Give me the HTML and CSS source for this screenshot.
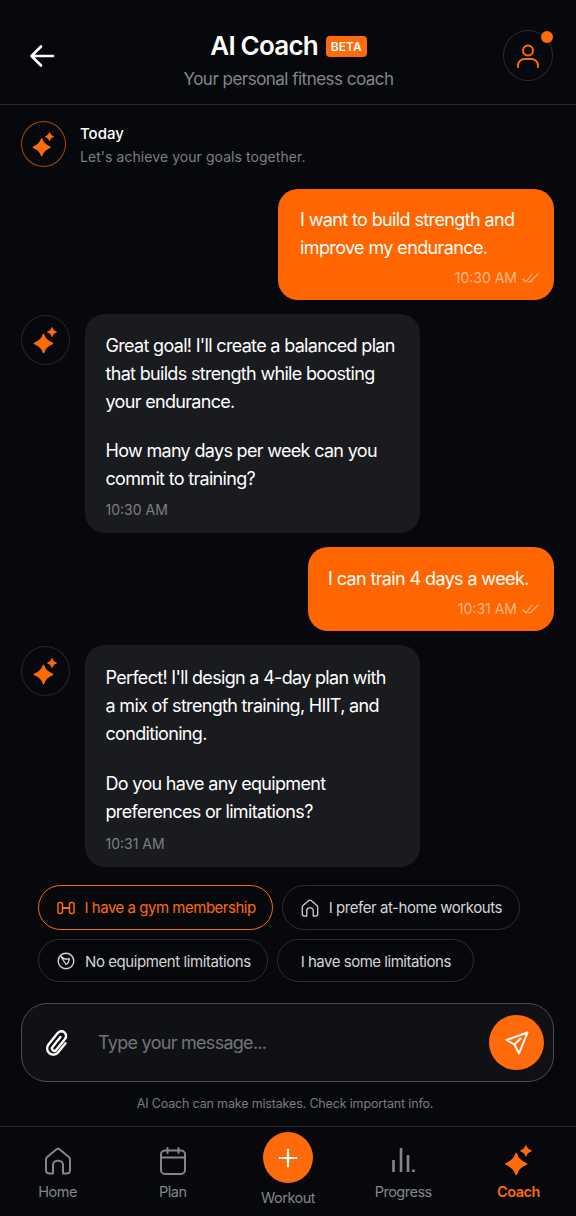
FILE: index.html
```html
<!DOCTYPE html>
<html lang="en">
<head>
    <meta charset="UTF-8" />
    <meta name="viewport" content="width=device-width, initial-scale=1.0" />
    <title>AI Coach</title>
    <link rel="stylesheet" href="styles.css">
</head>
<body>
    <svg class="sprites" width="0" height="0">
        <symbol id="sparkle" viewBox="0 0 25 28">
            <path d="M10.500 8.500c1 4 4 7 9 9-5 2-8 5-9 9-1-4-4-7-9-9 5-2 8-5 9-9z" fill="currentColor" stroke="currentColor" stroke-width="1.600" stroke-linejoin="round"/>
            <path d="M19 1.500c.6 2 2 3.700 4.500 4.500-2.500.8-3.900 2.500-4.500 4.500-.6-2-2-3.700-4.500-4.500 2.500-.8 3.900-2.500 4.500-4.500z" fill="currentColor" stroke="currentColor" stroke-width="1" stroke-linejoin="round"/>
        </symbol>
        <symbol id="home" viewBox="0 0 28 28">
            <path d="M2 12.500c0-1 .4-1.800 1.200-2.500l9-7.500c1-.8 2.600-.8 3.600 0l9 7.500c.8.7 1.200 1.500 1.200 2.500V23c0 2-1.500 3.500-3.500 3.500H19V18c0-2.500-1.800-4.300-4.300-4.300h-1.400C10.800 13.700 9 15.500 9 18v8.500H5.500C3.500 26.500 2 25 2 23z" fill="none" stroke="currentColor" stroke-width="2" stroke-linejoin="round"/>
        </symbol>
        <symbol id="ticks" viewBox="0 0 18 12">
            <path d="M1 7l3 3 6-8M7 9.500l1 .5 8-8" fill="none" stroke="currentColor" stroke-width="1.100" stroke-linecap="round" stroke-linejoin="round"/>
        </symbol>
    </svg>

    <div class="app">
        <header class="header">
            <button class="back" aria-label="Back">
                <svg width="28" height="28" viewBox="0 0 28 28"><path d="M25 14H4M13 4.500 3.500 14l9.500 9.500" fill="none" stroke="#fff" stroke-width="2.600" stroke-linecap="round" stroke-linejoin="round"/></svg>
            </button>
            <div class="header-title">
                <div class="title-row">
                    <h1>AI Coach</h1>
                    <span class="beta">BETA</span>
                </div>
                <p>Your personal fitness coach</p>
            </div>
            <div class="profile">
                <svg width="24" height="26" viewBox="0 0 24 26"><circle cx="12" cy="7.500" r="5" fill="none" stroke="currentColor" stroke-width="2"/><path d="M2 24v-1.500a6.500 6.500 0 0 1 6.500-6.500h7a6.500 6.500 0 0 1 6.500 6.500V24" fill="none" stroke="currentColor" stroke-width="2" stroke-linecap="round"/></svg>
                <span class="dot"></span>
            </div>
        </header>

        <div class="today">
            <div class="avatar avatar-orange"><svg width="23" height="26"><use href="#sparkle"/></svg></div>
            <div class="today-copy">
                <div class="today-label">Today</div>
                <div class="today-text">Let's achieve your goals together.</div>
            </div>
        </div>

        <main class="chat">
            <div class="bubble user first">
                <p>I want to build strength and improve my endurance.</p>
                <div class="meta">10:30 AM <svg width="18" height="12"><use href="#ticks"/></svg></div>
            </div>

            <div class="bot-row">
                <div class="avatar"><svg width="25" height="28"><use href="#sparkle"/></svg></div>
                <div class="bubble bot">
                    <p>Great goal! I'll create a balanced plan that builds strength while boosting your endurance.</p>
                    <p>How many days per week can you commit to training?</p>
                    <div class="meta">10:30 AM</div>
                </div>
            </div>

            <div class="bubble user second">
                <p>I can train 4 days a week.</p>
                <div class="meta">10:31 AM <svg width="18" height="12"><use href="#ticks"/></svg></div>
            </div>

            <div class="bot-row">
                <div class="avatar"><svg width="25" height="28"><use href="#sparkle"/></svg></div>
                <div class="bubble bot tall">
                    <p>Perfect! I'll design a 4-day plan with a mix of strength training, HIIT, and conditioning.</p>
                    <p>Do you have any equipment preferences or limitations?</p>
                    <div class="meta">10:31 AM</div>
                </div>
            </div>
        </main>

        <div class="chips">
            <div class="chip-line">
                <div class="chip active">
                    <svg width="18" height="18" viewBox="0 0 18 18"><rect x="1" y="3.500" width="4.500" height="11" rx="2" fill="none" stroke="currentColor" stroke-width="1.500"/><rect x="12.500" y="3.500" width="4.500" height="11" rx="2" fill="none" stroke="currentColor" stroke-width="1.500"/><path d="M5.500 9h7" fill="none" stroke="currentColor" stroke-width="2"/></svg>
                    I have a gym membership
                </div>
                <div class="chip home-chip">
                    <svg width="18" height="18"><use href="#home"/></svg>
                    I prefer at-home workouts
                </div>
            </div>
            <div class="chip-line low">
                <div class="chip loose">
                    <svg width="18" height="18" viewBox="0 0 18 18"><circle cx="9" cy="9" r="7.800" fill="none" stroke="currentColor" stroke-width="1.400"/><path d="M4.500 5.500l3 1.500h5L11 11l-2 1.500L7.500 10zM3.500 4l4 3" fill="none" stroke="currentColor" stroke-width="1.300" stroke-linejoin="round"/></svg>
                    No equipment limitations
                </div>
                <div class="chip plain">I have some limitations</div>
            </div>
        </div>

        <div class="composer">
            <svg class="clip" width="24" height="28" viewBox="0 0 24 28"><path d="M15.500 8 7.500 18a2.300 2.300 0 0 0 3.600 2.900L20 10a4.700 4.700 0 0 0-7.300-6L3.500 15.500a6.200 6.200 0 0 0 9.700 7.800l7.300-9" fill="none" stroke="#fff" stroke-width="2.400" stroke-linecap="round" stroke-linejoin="round"/></svg>
            <span class="placeholder">Type your message...</span>
            <div class="send">
                <svg width="26" height="26" viewBox="0 0 26 26"><path d="M23.500 2.500 2.500 10l8 4.500 4.500 9zM10.500 14.500l6-6" fill="none" stroke="#fff" stroke-width="1.900" stroke-linejoin="round" stroke-linecap="round"/></svg>
            </div>
        </div>
        <div class="note">AI Coach can make mistakes. Check important info.</div>

        <nav class="nav">
            <div class="nav-item">
                <svg width="28" height="28"><use href="#home"/></svg>
                <span>Home</span>
            </div>
            <div class="nav-item">
                <svg width="28" height="28" viewBox="0 0 28 28"><rect x="2" y="3.500" width="24" height="23.500" rx="4" fill="none" stroke="currentColor" stroke-width="2"/><path d="M2 10.500h24M8.500 1v5M19.500 1v5" fill="none" stroke="currentColor" stroke-width="2" stroke-linecap="round"/></svg>
                <span>Plan</span>
            </div>
            <div class="nav-item workout">
                <div class="plus">
                    <svg width="22" height="22" viewBox="0 0 22 22"><path d="M11 2.500v17M2.500 11h17" fill="none" stroke="#fff" stroke-width="2.200" stroke-linecap="round"/></svg>
                </div>
                <span>Workout</span>
            </div>
            <div class="nav-item">
                <svg width="28" height="28" viewBox="0 0 28 28"><path d="M4.500 13v12M12 1v24M19 8v17M24.500 22.500V25" fill="none" stroke="currentColor" stroke-width="2.600"/></svg>
                <span>Progress</span>
            </div>
            <div class="nav-item current">
                <svg width="29" height="32"><use href="#sparkle"/></svg>
                <span>Coach</span>
            </div>
        </nav>
    </div>
</body>
</html>
```

FILE: styles.css
```css
* {
    box-sizing: border-box;
}

body {
    margin: 0;
    background-color: #07080c;
    font-family: Inter, 'Noto Sans', sans-serif;
    color: #fff;
}

.sprites {
    display: block;
    height: 0;
}

.app {
    width: 576px;
    height: 1216px;
    display: flex;
    flex-direction: column;
    overflow: hidden;
}

.header {
    height: 105px;
    flex-shrink: 0;
    display: flex;
    align-items: flex-start;
    justify-content: space-between;
    padding: 29px 23px 0 28px;
    border-bottom: 1px solid #26282d;
}

.back {
    background: none;
    border: none;
    padding: 0;
    margin-top: 13px;
    width: 28px;
    height: 28px;
}

.header-title {
    text-align: center;
    padding-left: 18px;
}

.title-row {
    display: flex;
    align-items: center;
    justify-content: center;
    gap: 8px;
    height: 32px;
}

h1 {
    margin: 0;
    font-size: 26px;
    font-weight: 600;
    letter-spacing: -0.8px;
}

.beta {
    background-color: #ff6a0a;
    border-radius: 4px;
    margin-top: 2px;
    font-size: 12px;
    font-weight: 600;
    padding: 3px 5px;
    line-height: 15px;
}

.header-title p {
    margin: 8px 0 0;
    color: #84868c;
    font-size: 17px;
    letter-spacing: -0.52px;
}

.profile {
    position: relative;
    width: 50px;
    height: 51px;
    margin-top: 1px;
    border: 1px solid #2b2d31;
    border-radius: 50%;
    color: #ff6a0a;
    display: flex;
    align-items: center;
    justify-content: center;
}

.dot {
    position: absolute;
    top: 0;
    right: -1px;
    width: 12px;
    height: 12px;
    border-radius: 50%;
    background-color: #ff6a0a;
}

.avatar {
    width: 49px;
    height: 50px;
    margin-top: 1px;
    flex-shrink: 0;
    border: 1px solid #26282d;
    border-radius: 50%;
    color: #ff6a0a;
    display: flex;
    align-items: center;
    justify-content: center;
}

.avatar-orange {
    border: 1.500px solid #a84a14;
    width: 45px;
    height: 46px;
    margin-top: 0;
}

.today {
    display: flex;
    align-items: flex-start;
    gap: 14px;
    padding: 16px 21px 0;
}

.today-copy {
    margin-top: 2px;
}

.today-label {
    font-size: 15px;
    font-weight: 500;
    line-height: 22px;
}

.today-text {
    font-size: 14px;
    letter-spacing: 0.06px;
    color: #7d7f86;
    line-height: 24px;
}

.chat {
    display: flex;
    flex-direction: column;
    gap: 14px;
    padding: 20px 22px 0 21px;
}

.bubble p {
    margin: 0;
    font-size: 18px;
    line-height: 28px;
    letter-spacing: -0.68px;
}

.bubble p + p {
    margin-top: 21px;
}

.user {
    align-self: flex-end;
    background-color: #ff6600;
    border-radius: 20px;
    padding: 17px 14px 12px 22px;
}

.user p {
    letter-spacing: -0.62px;
}

.first {
    width: 276px;
}

.second {
    width: 246px;
    padding-top: 18px;
    padding-left: 20px;
}

.bot-row {
    display: flex;
    gap: 15px;
}

.bot {
    width: 335px;
    background-color: #1a1b1f;
    border-radius: 20px;
    padding: 18px 24px 13px 20.500px;
}

.bot.tall {
    padding-top: 19px;
}

.bot.tall p + p {
    margin-top: 22px;
}

.bot.tall .meta {
    margin-top: 8px;
}

.meta {
    display: flex;
    align-items: center;
    gap: 5px;
    margin-top: 7px;
    font-size: 14px;
    line-height: 20px;
    color: #7d7f86;
}

.user .meta {
    justify-content: flex-end;
    color: #ffb98c;
    margin-top: 6px;
}

.chips {
    display: flex;
    flex-direction: column;
    gap: 9px;
    padding: 18px 21px 0 38px;
}

.chip-line {
    display: flex;
    gap: 9px;
    height: 45px;
}

.chip-line.low {
    height: 43px;
}

.chip-line.low .chip {
    padding-top: 1px;
}

.chip {
    display: flex;
    align-items: center;
    gap: 10px;
    padding: 0 16px 0 18px;
    border: 1px solid #2d2f34;
    border-radius: 23px;
    font-size: 15px;
    letter-spacing: -0.48px;
    color: #d4d5d8;
}

.chip.active {
    border: 1.500px solid #ff6a0a;
    color: #ff6a0a;
    padding-left: 17.500px;
}

.chip.home-chip {
    letter-spacing: -0.45px;
    padding-right: 17px;
}

.chip.loose {
    letter-spacing: -0.42px;
    padding-right: 16px;
}

.chip.plain {
    padding: 0 22px 0 23px;
}

.composer {
    margin: 21px 22px 0 21px;
    height: 79px;
    flex-shrink: 0;
    display: flex;
    align-items: center;
    padding: 0 9px 0 23px;
    background-color: #101115;
    border: 1.500px solid #4b4c50;
    border-radius: 26px;
}

.clip {
    flex-shrink: 0;
}

.placeholder {
    flex: 1;
    margin-left: 29px;
    font-size: 18px;
    letter-spacing: -0.72px;
    color: #72747b;
}

.send {
    width: 55px;
    height: 55px;
    border-radius: 50%;
    background-color: #ff6a0a;
    display: flex;
    align-items: center;
    justify-content: center;
}

.note {
    margin-top: 13px;
    padding-right: 6px;
    text-align: center;
    font-size: 12.500px;
    letter-spacing: -0.16px;
    line-height: 18px;
    color: #7a7c82;
}

.nav {
    margin-top: 13px;
    flex: 1;
    display: grid;
    grid-template-columns: repeat(5, 1fr);
    border-top: 1px solid #26282d;
}

.nav-item {
    display: flex;
    flex-direction: column;
    align-items: center;
    padding-top: 20px;
    gap: 8px;
    font-size: 14.500px;
    letter-spacing: -0.5px;
    line-height: 18px;
    color: #84868c;
}

.nav-item svg {
    display: block;
}

.workout {
    padding-top: 5px;
    gap: 6px;
}

.plus {
    width: 50px;
    height: 51px;
    border-radius: 50%;
    background-color: #ff6a0a;
    display: flex;
    align-items: center;
    justify-content: center;
}

.current {
    color: #ff6a0a;
    font-weight: 600;
    padding-top: 17px;
    gap: 7px;
}
```
